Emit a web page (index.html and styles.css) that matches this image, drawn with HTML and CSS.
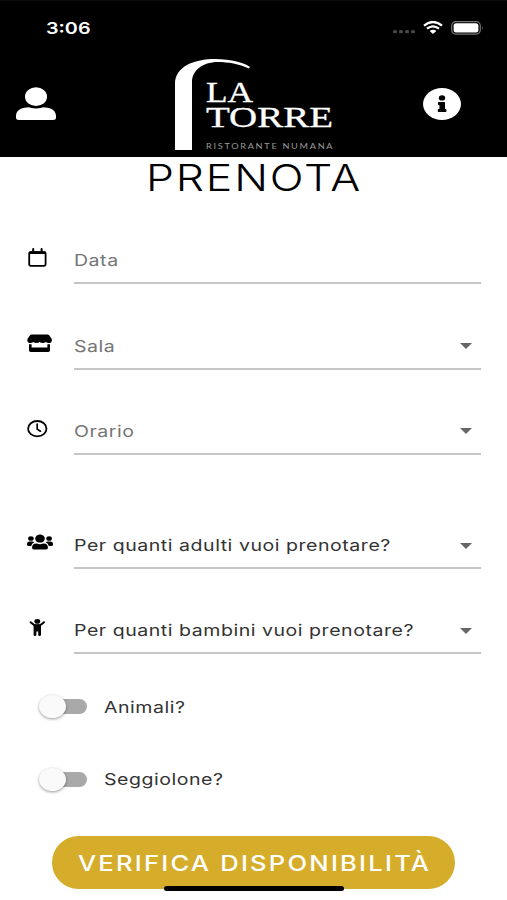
FILE: index.html
```html
<!DOCTYPE html>
<html lang="it">
  <head>
    <meta charset="UTF-8" />
    <meta name="viewport" content="width=device-width, initial-scale=1.0" />
    <title>La Torre - Prenota</title>
    <link rel="stylesheet" href="styles.css">
  </head>
  <body>
    <div class="screen">
      <header class="header">
        <div class="status">
          <span class="time wide">3:06</span>
          <div class="status-icons">
            <svg class="dots" viewBox="0 0 23 4"><g fill="#484848"><rect x="0" width="4" height="3.2" rx="1.5" /><rect x="6" width="4" height="3.2" rx="1.5" /><rect x="12" width="4" height="3.2" rx="1.5" /><rect x="18" width="4" height="3.2" rx="1.5" /></g></svg>
            <svg class="wifi" viewBox="0 0 20 13" preserveAspectRatio="none">
              <path d="M1 4.6Q10-2.6 19 4.6M4 7.7Q10 3 16 7.7" fill="none" stroke="#fff" stroke-width="2.3" />
              <path d="M6.6 10Q10 7.4 13.4 10L10 13z" fill="#fff" />
            </svg>
            <svg class="battery" viewBox="0 0 33 14">
              <rect x=".7" y=".7" width="28.6" height="12.4" rx="4" fill="none" stroke="#777" stroke-width="1.2" />
              <rect x="2.6" y="2.3" width="24.8" height="9.2" rx="2.5" fill="#fff" />
              <path d="M31 5q1.6 2 0 4z" fill="#777" />
            </svg>
          </div>
        </div>
        <div class="navbar">
          <svg class="user" viewBox="0 0 40 33">
            <ellipse cx="20" cy="9.7" rx="11" ry="9.4" fill="#fff" />
            <path d="M11 20.4C14 20 16 21.6 20 21.6S26 20 29 20.4C36 20.5 40 24 40 29V30.5Q40 33 37 33H3Q0 33 0 30.5V29C0 24 4 20.5 11 20.4z" fill="#fff" />
          </svg>
          <div class="logo">
            <svg class="arch" viewBox="0 0 76 91">
              <path d="M0 91V25C0 7 20 0 40 0C56 0 70 4 75 8L74 9.5C64 5 53 3 43 3C27 3 17 12 17 23V91z" fill="#fff" />
            </svg>
            <div class="logo-text">
              <span class="logo-name la wide">LA</span>
              <span class="logo-name torre wide">TORRE</span>
              <span class="logo-sub wide">RISTORANTE NUMANA</span>
            </div>
          </div>
          <svg class="info" viewBox="0 0 38 32">
            <ellipse cx="19" cy="16" rx="19" ry="16" fill="#fff" />
            <ellipse cx="19" cy="9.9" rx="3.2" ry="2.6" />
            <path d="M15.7 14H21.4Q22 14 22 14.7V21H22.6Q23.4 21 23.4 21.7V23.3Q23.4 24 22.6 24H15.6Q14.8 24 14.8 23.3V21.7Q14.8 21 15.6 21H16.4V17H15.7Q14.9 17 14.9 16.3V14.7Q14.9 14 15.7 14z" />
          </svg>
        </div>
      </header>

      <h1 class="title"><span class="wide">PRENOTA</span></h1>

      <form class="form">
        <div class="field">
          <svg class="icon" viewBox="0 0 28 20">
            <rect x="2.2" y="4.2" width="16.4" height="13.6" rx="1.8" fill="none" stroke="#000" stroke-width="1.8" />
            <path d="M1.8 6V4.6Q1.8 3.2 3.6 3.2H17.2Q19 3.2 19 4.6V6z" />
            <path d="M6.2 1V4M14.6 1V4" stroke="#000" stroke-width="2" stroke-linecap="round" />
          </svg>
          <div class="input"><span class="placeholder wide">Data</span></div>
        </div>
        <div class="field">
          <svg class="icon" viewBox="0 0 28 20">
            <path d="M4.6 .4H20.6Q21.6 .4 22.2 1.2L24.6 4.8C25.6 6.8 24.2 9 21.8 9Q20 9 18.8 8Q17.4 9 15.7 9Q14 9 12.6 8Q11.2 9 9.5 9Q7.8 9 6.4 8Q5.1 9 3.4 9C1 9-.4 6.8.6 4.8L3 1.2Q3.6 .4 4.6 .4z" />
            <path d="M2 10.2H4.6V13.6H20.4V10.2H23V16.6Q23 18 21.2 18H3.8Q2 18 2 16.6z" />
          </svg>
          <div class="input"><span class="placeholder wide">Sala</span><i class="arrow"></i></div>
        </div>
        <div class="field">
          <svg class="icon" viewBox="0 0 28 20">
            <ellipse cx="10.3" cy="9.7" rx="9.2" ry="7.7" fill="none" stroke="#000" stroke-width="1.8" />
            <path d="M10.2 5V10.1L13.4 12.2" fill="none" stroke="#000" stroke-width="1.7" stroke-linecap="round" />
          </svg>
          <div class="input"><span class="placeholder wide">Orario</span><i class="arrow"></i></div>
        </div>
        <div class="field people">
          <svg class="icon" viewBox="0 0 28 20">
            <ellipse cx="13" cy="5.6" rx="4.8" ry="4" />
            <ellipse cx="3.9" cy="5.5" rx="2.8" ry="2.3" />
            <ellipse cx="22.1" cy="5.5" rx="2.8" ry="2.3" />
            <path d="M9.7 10.6Q13 11.9 16.3 10.6C19.4 10.5 20.9 12.2 20.9 14.4V15Q20.9 16.4 19.2 16.4H6.8Q5.1 16.4 5.1 15V14.4C5.1 12.2 6.6 10.5 9.7 10.6z" />
            <path d="M2.6 8.6H5.2Q6.4 8.6 7.2 9.3Q4.7 10.4 4.2 12.9H1.2Q0 12.9 0 11.8V10.8Q0 8.6 2.6 8.6zM23.4 8.6H20.8Q19.6 8.6 18.8 9.3Q21.3 10.4 21.8 12.9H24.8Q26 12.9 26 11.8V10.8Q26 8.6 23.4 8.6z" />
          </svg>
          <div class="input"><span class="wide">Per quanti adulti vuoi prenotare?</span><i class="arrow"></i></div>
        </div>
        <div class="field">
          <svg class="icon" viewBox="0 0 28 20">
            <ellipse cx="10.3" cy="3.4" rx="2.9" ry="2.4" />
            <path d="M3.6 4.2L7.4 7.3H13.2L17 4.2" fill="none" stroke="#000" stroke-width="2" stroke-linecap="round" stroke-linejoin="round" />
            <path d="M6.6 6.6H14V17Q14 18 12.6 18Q11.2 18 11.2 17V13.5H9.4V17Q9.4 18 8 18Q6.6 18 6.6 17z" />
          </svg>
          <div class="input"><span class="wide">Per quanti bambini vuoi prenotare?</span><i class="arrow"></i></div>
        </div>

        <div class="toggle">
          <div class="track"><div class="thumb"></div></div>
          <span class="wide">Animali?</span>
        </div>
        <div class="toggle">
          <div class="track"><div class="thumb"></div></div>
          <span class="wide">Seggiolone?</span>
        </div>

        <button type="button" class="button"><span class="wide">VERIFICA DISPONIBILITÀ</span></button>
      </form>
      <div class="home-bar"></div>
    </div>
  </body>
</html>
```
FILE: styles.css
```css
* {
  box-sizing: border-box;
}
body {
  margin: 0;
  background-color: #fff;
  font-family: Inter, "Liberation Sans", sans-serif;
  font-size: 16px;
  color: #333;
}
.screen {
  position: relative;
  width: 507px;
  height: 900px;
  overflow: hidden;
}
svg {
  display: block;
  flex-shrink: 0;
}
/* letters are wider than they are tall everywhere in the app */
.wide {
  display: inline-block;
  white-space: nowrap;
  transform: scaleX(1.22);
  transform-origin: left center;
}
.header {
  height: 157px;
  background-color: #000;
  border-top: 1px solid #0c0c0c;
}
.status {
  display: flex;
  justify-content: space-between;
  align-items: center;
  height: 53px;
  padding: 0 23px 0 46px;
}
.time {
  color: #fff;
  font-size: 16.2px;
  font-weight: 600;
}
.status-icons {
  display: flex;
  align-items: center;
}
.dots {
  width: 23px;
  height: 4px;
  margin: 8px 7px 0 0;
}
.wifi {
  width: 20px;
  height: 13px;
  margin-right: 8px;
}
.battery {
  width: 33px;
  height: 14px;
}
.navbar {
  display: flex;
  justify-content: space-between;
  align-items: flex-start;
  padding: 5px 46px 0 16px;
}
.user {
  width: 40px;
  height: 33px;
  margin-top: 28px;
}
.info {
  width: 38px;
  height: 32px;
  margin-top: 29px;
}
.logo {
  display: flex;
  width: 160px;
  margin-left: 30px;
}
.arch {
  width: 76px;
  height: 91px;
}
.logo-text {
  display: flex;
  flex-direction: column;
  align-items: flex-start;
  margin-left: -45px;
  padding-top: 17px;
  color: #fff;
}
.logo-name {
  height: 25px;
  font-family: "Liberation Serif", serif;
  font-size: 30px;
  line-height: 32px;
  -webkit-text-stroke: 0.3px #fff;
}
.la {
  transform: scaleX(1.18);
}
.torre {
  transform: scaleX(1.3);
}
.logo-sub {
  margin-top: 15px;
  font-family: Lato, sans-serif;
  font-size: 7.5px;
  line-height: 12px;
  letter-spacing: 1.4px;
  color: #999;
}
.title {
  height: 42px;
  margin: 0;
  padding: 0 0 0 146px;
  font-size: 36.5px;
  font-weight: 300;
  line-height: 42px;
  letter-spacing: 1.5px;
  color: #000;
}
.form {
  padding: 0 26px;
}
.field {
  display: flex;
  align-items: flex-end;
  height: 85.3px;
}
.people {
  margin-top: 29px;
}
.icon {
  width: 28px;
  height: 20px;
  margin: 0 19px 16px 1px;
}
.input {
  flex: 1;
  display: flex;
  justify-content: space-between;
  align-items: center;
  height: 46px;
  border-bottom: 2px solid #c6c6c6;
  letter-spacing: 0.44px;
}
.placeholder {
  color: #757575;
}
.arrow {
  margin: 1px 9px 0 0;
  border: 6.5px solid transparent;
  border-top: 6px solid #666;
  border-bottom: 0;
}
.toggle {
  display: flex;
  align-items: center;
  height: 72.4px;
  padding-left: 24px;
  letter-spacing: 0.44px;
}
.field + .toggle {
  margin-top: 16px;
}
.track {
  width: 37px;
  height: 15px;
  margin-right: 17px;
  border-radius: 8px;
  background-color: #a9a9a9;
}
.thumb {
  width: 27px;
  height: 23px;
  margin: -4px 0 0 -11px;
  border-radius: 50%;
  background-color: #fafafa;
  box-shadow: 0 1px 3px rgba(0, 0, 0, 0.4);
}
.button {
  display: block;
  width: 403px;
  height: 53px;
  margin: 21px 0 0 26px;
  padding: 1px 0 0 26px;
  border: 0;
  border-radius: 27px;
  background-color: #d6ad2b;
  color: #fff;
  font-family: inherit;
  font-size: 21px;
  font-weight: 500;
  letter-spacing: 1.8px;
  text-align: left;
}
.home-bar {
  position: absolute;
  left: 164px;
  bottom: 9px;
  width: 180px;
  height: 5px;
  border-radius: 3px;
  background-color: #000;
}
```
